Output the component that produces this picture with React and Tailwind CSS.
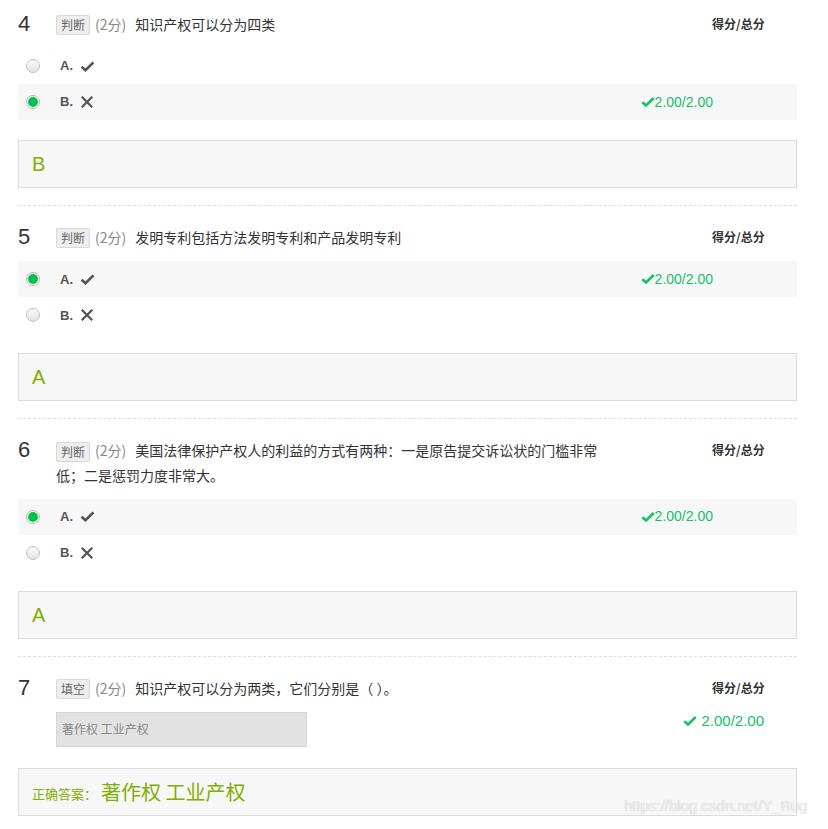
import React from "react";

const cn = '"Noto Sans CJK SC", "Liberation Sans", sans-serif';
const latin = '"Liberation Sans", "Noto Sans CJK SC", sans-serif';

function CheckMark({ className = "" }) {
  return (
    <svg viewBox="0 0 16 12" className={className} fill="none">
      <path d="M1.5 6.2 L5.8 10 L14.5 1.5" stroke="currentColor" strokeWidth="3" strokeLinejoin="miter" />
    </svg>
  );
}

function Cross({ className = "" }) {
  return (
    <svg viewBox="0 0 16 16" className={className} fill="none">
      <path d="M2 2 L14 14 M14 2 L2 14" stroke="currentColor" strokeWidth="2.6" />
    </svg>
  );
}

function Radio({ checked }) {
  if (checked) {
    return (
      <span className="w-[14px] h-[14px] rounded-full border border-[#b5b5b5] bg-white flex items-center justify-center">
        <span className="w-[10px] h-[10px] rounded-full bg-[#05c04f]" />
      </span>
    );
  }
  return (
    <span className="w-[14px] h-[14px] rounded-full border border-[#c2c2c2] bg-gradient-to-b from-[#fbfbfb] to-[#e3e3e3]" />
  );
}

function Score({ big }) {
  return (
    <span
      className={
        "flex items-center text-[#14c06a] " + (big ? "text-[15px] gap-[4px]" : "text-[14px]")
      }
      style={{ fontFamily: latin }}
    >
      <CheckMark className="w-[14px] h-[12px]" />
      2.00/2.00
    </span>
  );
}

function Header({ num, tag, text }) {
  return (
    <div className="flex items-start">
      <div className="w-[38px] h-[24px] leading-[24px] text-[22px] text-[#333]" style={{ fontFamily: latin }}>
        {num}
      </div>
      <div className="flex-1" style={{ fontFamily: cn }}>
        <div className="w-[552px] leading-[24px] text-[14px] text-[#333]">
          <span className="inline-block align-middle relative -top-[1px] h-[20px] px-[4px] mr-[5px] leading-[18px] border border-[#d8d8d8] bg-[#eeeeee] text-[12px] text-[#666] rounded-[2px]">
            {tag}
          </span>
          <span className="mr-[9px] text-[#888]">(2分)</span>
          <span>{text}</span>
        </div>
      </div>
      <div className="w-[85px] leading-[24px] text-[12px] font-bold text-[#333]" style={{ fontFamily: cn }}>
        得分/总分
      </div>
    </div>
  );
}

function Option({ label, checked, icon }) {
  return (
    <div className={"h-[36px] flex items-center pl-[8px] " + (checked ? "bg-[#f7f7f7]" : "")}>
      <Radio checked={checked} />
      <span className="ml-[20px] text-[13px] font-bold text-[#555]" style={{ fontFamily: latin }}>
        {label}
      </span>
      <span className="ml-[7px] text-[#555] flex items-center">
        {icon === "check" ? <CheckMark className="w-[15px] h-[11px]" /> : <Cross className="w-[14px] h-[14px]" />}
      </span>
      {checked && (
        <span className="ml-auto mr-[84px]">
          <Score />
        </span>
      )}
    </div>
  );
}

function AnswerBox({ children }) {
  return (
    <div className="mt-[20px] h-[48px] border border-[#dcdcdc] bg-[#f7f7f7] flex items-center pl-[13px] text-[20px] text-[#7fb000]" style={{ fontFamily: latin }}>
      {children}
    </div>
  );
}

function Judge({ num, text, answer }) {
  return (
    <div>
      <Header num={num} tag="判断" text={text} />
      <div className="mt-[12px]">
        <Option label="A." icon="check" checked={answer === "A"} />
        <Option label="B." icon="cross" checked={answer === "B"} />
      </div>
      <AnswerBox>{answer}</AnswerBox>
      <div className="mt-[17px] mb-[19px] border-t border-dashed border-[#dddddd]" />
    </div>
  );
}

export default function App() {
  const questions = [
    { num: 4, text: "知识产权可以分为四类", answer: "B" },
    { num: 5, text: "发明专利包括方法发明专利和产品发明专利", answer: "A" },
    {
      num: 6,
      text: "美国法律保护产权人的利益的方式有两种：一是原告提交诉讼状的门槛非常低；二是惩罚力度非常大。",
      answer: "A",
    },
  ];

  return (
    <div className="relative w-[828px] h-[829px] bg-white overflow-hidden">
      <div className="pl-[18px] pt-[12px] w-[797px]">
        {questions.map((q) => (
          <Judge key={q.num} {...q} />
        ))}

        <div>
          <Header num={7} tag="填空" text="知识产权可以分为两类，它们分别是（ ）。" />
          <div className="flex items-start">
            <div
              className="ml-[38px] mt-[12px] w-[251px] h-[35px] bg-[#e2e2e2] border border-[#d6d6d6] flex items-center pl-[5px] text-[12px] text-[#8a8a8a]"
              style={{ fontFamily: cn }}
            >
              著作权 工业产权
            </div>
            <div className="ml-auto mr-[33px] mt-[10px]">
              <Score big />
            </div>
          </div>
          <div className="mt-[21px] h-[48px] border border-[#dcdcdc] bg-[#f7f7f7] flex items-center pl-[13px] text-[#7fb000]" style={{ fontFamily: cn }}>
            <span className="text-[13px] mt-[4px]">正确答案：</span>
            <span className="ml-[4px] text-[20px]">著作权 工业产权</span>
          </div>
        </div>
      </div>

      <div
        className="absolute left-[624px] top-[795px] text-[15px] text-white/80 whitespace-nowrap"
        style={{ fontFamily: latin, textShadow: "0 0 1px rgba(120,120,120,0.6)" }}
      >
        https://blog.csdn.net/Y_Bug
      </div>
    </div>
  );
}
